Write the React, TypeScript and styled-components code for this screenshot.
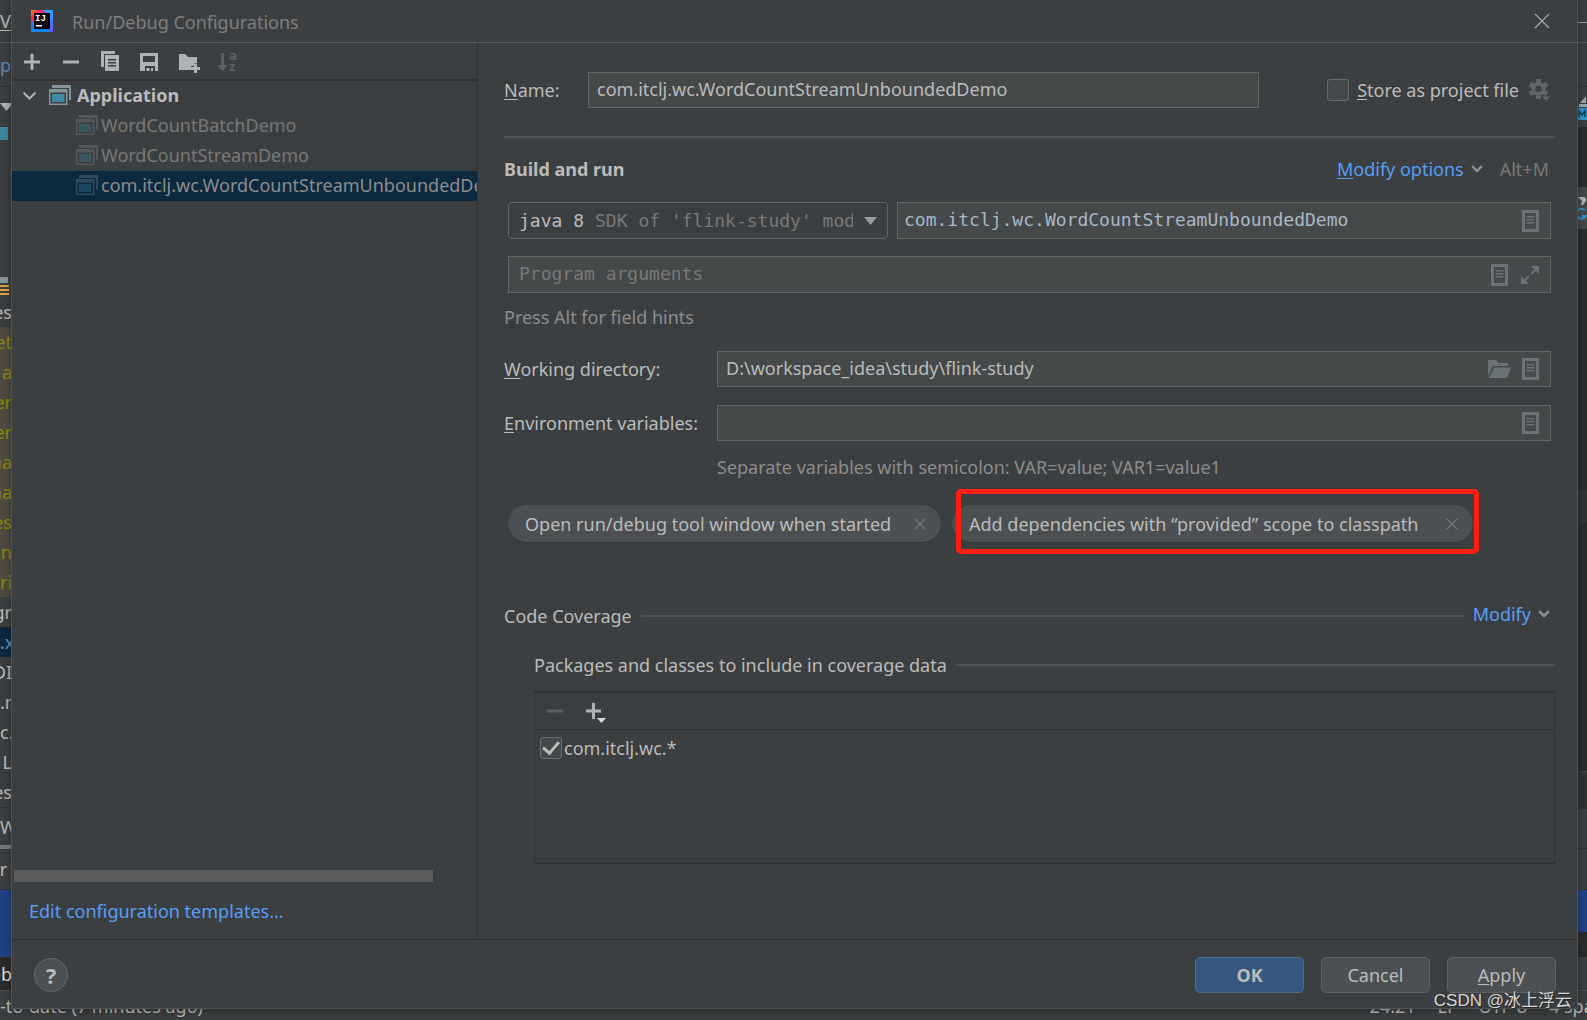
import React, { useState } from "react";
import styled, { createGlobalStyle, css } from "styled-components";

const sans = `"Noto Sans", "Open Sans", "Noto Sans CJK SC", sans-serif`;
const mono = `"DejaVu Sans Mono", "Liberation Mono", monospace`;

const c = {
  panel: "#3c3f41",
  editor: "#2b2b2b",
  field: "#45494a",
  fieldBorder: "#646464",
  text: "#bbbbbb",
  muted: "#8c8c8c",
  faint: "#787878",
  line: "#515151",
  dark: "#323232",
  link: "#589df6",
  select: "#0d293e",
  icon: "#afb1b3",
  fieldIcon: "#6b7275",
};

const GlobalStyle = createGlobalStyle`
  * { box-sizing: border-box; }
  body {
    margin: 0;
    background: ${c.panel};
    color: ${c.text};
    font-family: ${sans};
    font-size: 18px;
    line-height: 24px;
    overflow: hidden;
  }
  button, input, select { font: inherit; color: inherit; margin: 0; }
  button { cursor: pointer; }
  svg { display: block; flex: none; }
  u { text-decoration-thickness: 1px; text-underline-offset: 2px; }
`;

/* ---------- IDE window behind the dialog ---------- */

const Ide = styled.div`
  position: relative;
  display: flex;
  flex-direction: column;
  height: 100vh;
  overflow: hidden;
`;

const IdeBody = styled.div`
  display: flex;
  justify-content: space-between;
  flex: 1;
  min-height: 0;
`;

const Strip = styled.div`
  width: 12px;
  overflow: hidden;
`;

const Band = styled.div<{ h: number; bg?: string; fg?: string; top?: string; $end?: boolean }>`
  display: flex;
  align-items: center;
  justify-content: ${(p) => (p.$end ? "flex-end" : "flex-start")};
  height: ${(p) => p.h}px;
  background: ${(p) => p.bg ?? c.panel};
  color: ${(p) => p.fg ?? c.text};
  border-top: ${(p) => (p.top ? `1px solid ${p.top}` : "none")};
  white-space: pre;
  overflow: hidden;
`;

const Ignored = styled.span`
  color: #b07a35;
`;

const TabMark = styled.div`
  height: 4px;
  background: #747a80;
`;

const StatusBar = styled.footer`
  display: flex;
  align-items: center;
  gap: 22px;
  height: 30px;
  border-top: 1px solid #4b4d4e;
  white-space: nowrap;
`;

const StatusText = styled.span`
  flex: 1;
`;

const StatusClip = styled.span`
  width: 38px;
  overflow: hidden;
`;

/* ---------- Dialog frame ---------- */

const Dialog = styled.section`
  position: absolute;
  inset: 0 9px 11px 11px;
  display: flex;
  flex-direction: column;
  background: ${c.panel};
  border: 1px solid #505354;
  border-top: 0;
  box-shadow: 0 2px 8px rgba(0, 0, 0, 0.35);
`;

const TitleBar = styled.header`
  display: flex;
  align-items: center;
  height: 43px;
  padding: 0 27px 0 19px;
  border-bottom: 1px solid #555859;
  color: #7c7e7f;
`;

const Title = styled.h1`
  flex: 1;
  margin: 0 0 0 19px;
  padding-top: 2px;
  font-size: 18px;
  font-weight: 400;
`;

const IconButton = styled.button`
  display: flex;
  align-items: center;
  justify-content: center;
  padding: 0;
  border: 0;
  background: none;
`;

const Body = styled.div`
  display: flex;
  flex: 1;
  min-height: 0;
`;

const Sidebar = styled.aside`
  display: flex;
  flex-direction: column;
  width: 466px;
  border-right: 1px solid #2f3133;
`;

const Toolbar = styled.div`
  display: flex;
  align-items: center;
  gap: 15px;
  height: 38px;
  padding: 2px 8px 0;
  border-bottom: 2px solid ${c.dark};
`;

const Tree = styled.ul`
  flex: 1;
  margin: 0;
  padding: 0;
  list-style: none;
  overflow: hidden;
`;

const TreeRow = styled.li<{ $child?: boolean; $selected?: boolean }>`
  display: flex;
  align-items: center;
  gap: ${(p) => (p.$child ? 3 : 6)}px;
  height: 30px;
  padding: 0 0 2px ${(p) => (p.$child ? 64 : 10)}px;
  white-space: nowrap;
  overflow: hidden;
  background: ${(p) => (p.$selected ? c.select : "transparent")};
  color: ${(p) => (p.$selected ? c.muted : p.$child ? c.faint : c.text)};
  font-weight: ${(p) => (p.$child ? 400 : 700)};
`;

const Chevron = styled.span`
  width: 21px;
`;

const ScrollThumb = styled.div`
  width: 90%;
  height: 12px;
  margin-left: 2px;
  background: #595b5d;
`;

const TemplatesLink = styled.a`
  margin: 17px 0 16px 17px;
  color: ${c.link};
  text-decoration: none;
`;

const Footer = styled.footer`
  display: flex;
  align-items: center;
  gap: 17px;
  height: 69px;
  padding: 2px 21px 0 22px;
  border-top: 1px solid #2f3133;
`;

const HelpButton = styled.button`
  width: 34px;
  height: 34px;
  margin-right: auto;
  padding: 0;
  border: 1px solid #64686a;
  border-radius: 50%;
  background: #4c5052;
  font-size: 22px;
  font-weight: 700;
  line-height: 30px;
`;

const DialogButton = styled.button<{ $primary?: boolean }>`
  width: 109px;
  height: 36px;
  padding: 0;
  border: 1px solid #5e6060;
  border-radius: 5px;
  background: #4c5052;
  ${(p) =>
    p.$primary &&
    css`
      border-color: #4c708c;
      background: #365880;
      font-weight: 700;
    `}
`;

/* ---------- Form ---------- */

const Form = styled.main`
  flex: 1;
  min-width: 0;
  padding: 29px 22px 0 26px;
`;

const Row = styled.div<{ $top?: number; $inset?: boolean }>`
  display: flex;
  align-items: center;
  gap: 9px;
  margin-top: ${(p) => p.$top ?? 0}px;
  padding: 0 4px 0 ${(p) => (p.$inset ? 4 : 0)}px;
`;

const Label = styled.label<{ $w: number }>`
  width: ${(p) => p.$w}px;
  margin-right: -9px;
`;

const Field = styled.div<{ $mono?: boolean; $pad?: number }>`
  display: flex;
  align-items: center;
  gap: ${(p) => (p.$mono ? 13 : 11)}px;
  flex: 1;
  min-width: 0;
  height: ${(p) => (p.$mono ? 37 : 36)}px;
  padding: 0 11px 0 ${(p) => p.$pad ?? 8}px;
  border: 1px solid ${c.fieldBorder};
  background: ${c.field};
  font-family: ${(p) => (p.$mono ? mono : sans)};
  color: ${(p) => (p.$mono ? "#a9b7c6" : c.text)};
`;

const TextInput = styled.input`
  flex: 1;
  min-width: 0;
  padding: 0 0 2px;
  border: 0;
  outline: 0;
  background: none;
  &::placeholder {
    color: ${c.faint};
    opacity: 1;
  }
`;

const CheckLabel = styled.label<{ $gap: number }>`
  display: flex;
  align-items: center;
  gap: ${(p) => p.$gap}px;
`;

const CheckBox = styled.input`
  appearance: none;
  display: grid;
  place-items: center;
  width: 22px;
  height: 22px;
  border: 1px solid #6b6b6b;
  border-radius: 3px;
  background: #43494a;
  &:checked::after {
    content: "";
    width: 7px;
    height: 13px;
    margin-bottom: 4px;
    border: solid ${c.text};
    border-width: 0 3px 3px 0;
    transform: rotate(40deg);
  }
`;

const StoreGroup = styled.div`
  display: flex;
  align-items: center;
  gap: 10px;
  margin-left: 59px;
`;

const Divider = styled.hr`
  height: 2px;
  margin: 28px 0 0;
  border: 0;
  background: ${c.line};
`;

const Heading = styled.h2`
  flex: 1;
  margin: 0;
  font-size: 18px;
  font-weight: 700;
  line-height: 30px;
`;

const LinkButton = styled.button`
  display: flex;
  align-items: center;
  gap: 7px;
  padding: 0;
  border: 0;
  background: none;
  color: ${c.link};
`;

const Shortcut = styled.kbd`
  margin: 0 2px 0 8px;
  font-family: ${sans};
  color: ${c.faint};
`;

const Combo = styled.div`
  display: flex;
  align-items: center;
  gap: 11px;
  width: 380px;
  height: 37px;
  padding: 0 10px;
  border: 1px solid ${c.fieldBorder};
  border-radius: 4px;
  font-family: ${mono};
`;

const Select = styled.select`
  appearance: none;
  flex: 1;
  min-width: 0;
  padding: 0;
  border: 0;
  outline: 0;
  background: none;
  color: ${c.faint};
`;

const Hint = styled.p<{ $top: number; $left?: number }>`
  margin: ${(p) => p.$top}px 0 0 ${(p) => p.$left ?? 0}px;
  color: ${c.muted};
`;

const Tags = styled.div`
  display: flex;
  gap: 11px;
  margin: 26px 0 0 4px;
`;

const Tag = styled.div<{ $w: number }>`
  position: relative;
  display: flex;
  align-items: center;
  justify-content: space-between;
  min-width: ${(p) => p.$w}px;
  height: 37px;
  padding: 0 15px 0 17px;
  border-radius: 19px;
  background: #4c5052;
  box-shadow: 0 1px 1px #35383a;
  white-space: nowrap;
`;

const Highlight = styled.span`
  position: absolute;
  inset: -16px -6px -12px 4px;
  border: 5px solid #ff1f10;
  border-radius: 5px;
  pointer-events: none;
`;

const GroupRow = styled.div<{ $top: number; $left?: number }>`
  display: flex;
  align-items: center;
  gap: 9px;
  height: 24px;
  margin: ${(p) => p.$top}px 0 0 ${(p) => p.$left ?? 0}px;
`;

const Rule = styled.span`
  flex: 1;
  height: 2px;
  background: ${c.line};
`;

const ModifyLink = styled(LinkButton)`
  margin-right: 5px;
  padding-bottom: 4px;
`;

const CoverageTable = styled.div`
  margin: 14px 0 0 30px;
  border: 1px solid ${c.dark};
  border-width: 2px 1px;
`;

const CoverageTools = styled.div`
  display: flex;
  align-items: center;
  gap: 15px;
  height: 37px;
  padding-left: 8px;
  border-bottom: 1px solid ${c.dark};
`;

const CoverageList = styled.div`
  min-height: 132px;
  padding: 6px 5px;
`;

const Watermark = styled.span`
  position: absolute;
  right: 15px;
  bottom: 7px;
  font-family: "Liberation Sans", "Noto Sans CJK SC", sans-serif;
  font-size: 17px;
  color: #d6d6d6;
  text-shadow: 1px 1px 1px #222;
`;

/* ---------- Icons ---------- */

const IntellijLogo = () => (
  <svg width="22" height="22" viewBox="0 0 22 22" aria-hidden="true">
    <defs>
      <linearGradient id="ij" x1="0" y1="0" x2="1" y2="1">
        <stop offset="0" stopColor="#fc801d" />
        <stop offset="0.22" stopColor="#fe2857" />
        <stop offset="0.42" stopColor="#7b5ad8" />
        <stop offset="0.6" stopColor="#087cfa" />
        <stop offset="1" stopColor="#3b7cf7" />
      </linearGradient>
      <linearGradient id="ijBlue" x1="0" y1="0" x2="0" y2="1">
        <stop offset="0" stopColor="#22a8ff" />
        <stop offset="1" stopColor="#6b57ff" />
      </linearGradient>
    </defs>
    <rect width="22" height="22" fill="url(#ij)" />
    <path d="M12 0h10v22h-4V4z" fill="url(#ijBlue)" />
    <path d="M0 11l4 3v4h14v4H0z" fill="#1684fb" />
    <rect x="3" y="3" width="16" height="16" fill="#0b0208" />
    <text x="4" y="11" fontFamily="Liberation Mono" fontSize="9" fontWeight="700" fill="#fff">IJ</text>
    <rect x="5" y="15" width="6" height="1.5" fill="#fff" />
  </svg>
);

const Close = ({ size, color, w = 1.2 }: { size: number; color: string; w?: number }) => (
  <svg width={size} height={size} viewBox="0 0 16 16" aria-hidden="true">
    <path d="M1 1l14 14M15 1L1 15" stroke={color} strokeWidth={w} fill="none" />
  </svg>
);

const ToolSvg = ({ children, color = c.icon }: { children: React.ReactNode; color?: string }) => (
  <svg width="24" height="24" viewBox="0 0 24 24" fill={color} aria-hidden="true">
    {children}
  </svg>
);

const Plus = () => (
  <ToolSvg>
    <path d="M10.5 4h3v6.500h6.500v3h-6.500V20h-3v-6.500H4v-3h6.500z" />
  </ToolSvg>
);

const Minus = ({ color }: { color?: string }) => (
  <ToolSvg color={color}>
    <rect x="4" y="10.500" width="16" height="3" />
  </ToolSvg>
);

const Copy = () => (
  <ToolSvg>
    <path d="M3 1h14v3H6v13H3z" />
    <path fillRule="evenodd" d="M7 5h14v16H7zM10 9v1.500h8V9zM10 12v1.500h8V12zM10 15v1.500h8V15z" />
  </ToolSvg>
);

const Save = () => (
  <ToolSvg>
    <path fillRule="evenodd" d="M3 3h18v18h-3v-5H8v5H3zM6 6v6h12V6z" />
    <path d="M9.500 18h3v3h-3zM14 18h2v3h-2z" />
  </ToolSvg>
);

const FolderPlus = () => (
  <ToolSvg>
    <path d="M3 4h6l3 3h9v6h-3v3h-3v4H3z" />
    <path d="M18 13.500h3V17h3v3h-3v3h-3v-3h-3.500v-3H18z" />
  </ToolSvg>
);

const SortAz = () => (
  <ToolSvg color="#5d6062">
    <path d="M6 3h3v12h4l-5.500 6L2 15h4z" />
    <text x="14" y="10" fontFamily="Noto Sans" fontSize="13" fontWeight="700">a</text>
    <text x="14" y="21" fontFamily="Noto Sans" fontSize="13" fontWeight="700">z</text>
  </ToolSvg>
);

const ArrowDown = ({ color = c.icon }: { color?: string }) => (
  <svg width="13" height="8" viewBox="0 0 13 8" aria-hidden="true">
    <path d="M0 0h13L6.500 8z" fill={color} />
  </svg>
);

const ChevronDown = ({ w, color, stroke }: { w: number; color: string; stroke: number }) => (
  <svg width={w} height={w * 0.6} viewBox="0 0 15 9" aria-hidden="true">
    <path d="M1.500 1.500l6 6 6-6" fill="none" stroke={color} strokeWidth={stroke} />
  </svg>
);

const AppIcon = ({ dim }: { dim?: boolean }) => (
  <svg width="22" height="20" viewBox="0 0 22 20" opacity={dim ? 0.3 : 1} aria-hidden="true">
    <path d="M3 0h19v15h-2V3H3z" fill="#87939a" />
    <path fillRule="evenodd" d="M0 4h18.500v16H0zM1.500 7.500v11H17v-11z" fill="#87939a" />
    <rect x="3" y="9" width="12.500" height="8" fill="#3e8ba8" />
  </svg>
);

const DocIcon = () => (
  <svg width="17" height="22" viewBox="0 0 17 22" fill={c.fieldIcon} aria-hidden="true">
    <path fillRule="evenodd" d="M0 0h17v22H0zM3 3v16h11V3z" />
    <path d="M4.500 6h8v1.500h-8zM4.500 9h8v1.500h-8zM4.500 12h8v1.500h-8z" />
  </svg>
);

const ExpandIcon = () => (
  <svg width="18" height="20" viewBox="0 0 18 20" aria-hidden="true">
    <path d="M10 1h8v8zM0 11v8h8z" fill={c.fieldIcon} />
    <path d="M3 16l5-5M10.500 9L15 4" stroke={c.fieldIcon} strokeWidth="2" />
  </svg>
);

const FolderIcon = () => (
  <svg width="23" height="18" viewBox="0 0 23 18" fill={c.fieldIcon} aria-hidden="true">
    <path d="M0 0h8l3 3h9v3H5L0 16z" />
    <path d="M6 7.500h17L19 18H1z" />
  </svg>
);

const GearIcon = () => (
  <svg width="22" height="24" viewBox="0 0 22 24" aria-hidden="true">
    <g fill="#616466">
      {[0, 60, 120].map((a) => (
        <rect key={a} x="7" y="1" width="5" height="20" rx="1" transform={`rotate(${a} 9.500 11)`} />
      ))}
      <path fillRule="evenodd" d="M9.500 4a7 7 0 1 0 0 14 7 7 0 0 0 0-14z" />
    </g>
    <circle cx="9.500" cy="11" r="3.200" fill={c.panel} />
    <path d="M12 18h10l-5 5.500z" fill="#616466" stroke={c.panel} />
  </svg>
);

const AddMenu = () => (
  <svg width="24" height="24" viewBox="0 0 24 24" aria-hidden="true">
    <path d="M10 4h3v6.500h6v3h-6V20h-3v-6.500H4v-3h6z" fill={c.icon} />
    <path d="M15 19h9l-4.500 5z" fill="#dcdcdc" />
  </svg>
);

/* ---------- Data ---------- */

const configs = [
  { name: "WordCountBatchDemo" },
  { name: "WordCountStreamDemo" },
  { name: "com.itclj.wc.WordCountStreamUnboundedDemo", selected: true },
];

const projectRows = ["et", "a", "er", "er", "na", "na", "es", "in", "ri"];

const LeftStrip = () => (
  <Strip aria-hidden="true">
    <Band h={42}>
      {" "}
      <u>V</u>
    </Band>
    <Band h={44} top="#555859" fg="#5d87b5">p</Band>
    <Band h={40} top={c.dark}>
      <ArrowDown />
    </Band>
    <Band h={14}>
      <svg width="8" height="13"><rect width="8" height="13" fill="#3e86a0" /></svg>
    </Band>
    <Band h={136} />
    <Band h={20}>
      <svg width="9" height="19">
        <rect width="8" height="6" fill="#87939a" />
        <path d="M0 9h9M0 13h9M0 17h9" stroke="#d9a343" strokeWidth="2" />
      </svg>
    </Band>
    <Band h={31} $end>es</Band>
    {projectRows.map((t, i) => (
      <Band key={i} h={30} bg="#4f4b41" fg="#8a8a08" $end>{t}</Band>
    ))}
    <Band h={30} $end>gr</Band>
    <Band h={30} bg={c.select} fg="#6897bb">.x</Band>
    <Band h={30} $end>DI</Band>
    <Band h={30}>.m</Band>
    <Band h={30}>c.</Band>
    <Band h={30} $end><Ignored>l</Ignored> L</Band>
    <Band h={30} $end>es</Band>
    <Band h={38} top={c.dark}>W</Band>
    <TabMark />
    <Band h={40} $end>er </Band>
    <Band h={68} top={c.dark} bg="#214283" />
    <Band h={33} top={c.dark} bg={c.editor} fg="#dddddd" $end>eb</Band>
  </Strip>
);

const RightStrip = () => (
  <Strip aria-hidden="true">
    <Band h={22} />
    <Band h={20} top="#9a9c9d" />
    <Band h={44} top="#555859" />
    <Band h={41} top={c.dark}>
      <svg width="12" height="26">
        <path d="M11 2v7H5z" fill="#9aa7b0" />
        <path d="M4 10h8v3H4z" fill="#9aa7b0" />
        <rect y="14" width="12" height="12" fill="#3592c4" />
        <path d="M4 23v-6l3 4 3-4v6" stroke="#1f3f4d" strokeWidth="1.500" fill="none" />
      </svg>
    </Band>
    <Band h={60} bg={c.editor} />
    <Band h={42} bg="#45494a">
      <svg width="12" height="26">
        <path d="M3 2h5a3 3 0 0 1 3 4l-3 4H6l1-4z" fill="#afb1b3" />
        <path d="M10 15a5 5 0 1 0 1 6h-4" stroke="#3592c4" strokeWidth="2" fill="none" />
      </svg>
    </Band>
    <Band h={261} bg={c.editor} />
    <Band h={33} bg="#323232" />
    <Band h={248} bg={c.editor} />
    <Band h={38} bg="#313335" top="#3c3f41" />
    <Band h={39} />
    <Band h={41} top={c.dark} />
    <Band h={43} top={c.dark} bg="#214283" />
    <Band h={25} bg={c.editor} />
    <Band h={33} />
  </Strip>
);

export default function App() {
  const [name, setName] = useState("com.itclj.wc.WordCountStreamUnboundedDemo");
  const [mainClass, setMainClass] = useState("com.itclj.wc.WordCountStreamUnboundedDemo");
  const [dir, setDir] = useState("D:\\workspace_idea\\study\\flink-study");

  return (
    <>
      <GlobalStyle />
      <Ide>
        <IdeBody>
          <LeftStrip />
          <RightStrip />
        </IdeBody>
        <StatusBar>
          <StatusText>-to-date (7 minutes ago)</StatusText>
          <span>24:21</span>
          <span>LF</span>
          <span>UTF-8</span>
          <StatusClip>4 spaces</StatusClip>
        </StatusBar>

        <Dialog role="dialog" aria-labelledby="dialog-title">
          <TitleBar>
            <IntellijLogo />
            <Title id="dialog-title">Run/Debug Configurations</Title>
            <IconButton aria-label="Close">
              <Close size={16} color="#a4a6a7" />
            </IconButton>
          </TitleBar>

          <Body>
            <Sidebar>
              <Toolbar>
                <IconButton aria-label="Add"><Plus /></IconButton>
                <IconButton aria-label="Remove"><Minus /></IconButton>
                <IconButton aria-label="Copy"><Copy /></IconButton>
                <IconButton aria-label="Save"><Save /></IconButton>
                <IconButton aria-label="New folder"><FolderPlus /></IconButton>
                <IconButton aria-label="Sort" disabled><SortAz /></IconButton>
              </Toolbar>
              <Tree>
                <TreeRow>
                  <Chevron>
                    <ChevronDown w={15} color={c.icon} stroke={2} />
                  </Chevron>
                  <AppIcon />
                  Application
                </TreeRow>
                {configs.map((cfg) => (
                  <TreeRow key={cfg.name} $child $selected={cfg.selected}>
                    <AppIcon dim />
                    {cfg.name}
                  </TreeRow>
                ))}
              </Tree>
              <ScrollThumb />
              <TemplatesLink href="#templates">Edit configuration templates...</TemplatesLink>
            </Sidebar>

            <Form>
              <Row>
                <Label $w={84} htmlFor="name"><u>N</u>ame:</Label>
                <Field>
                  <TextInput id="name" value={name} onChange={(e) => setName(e.target.value)} />
                </Field>
                <StoreGroup>
                  <CheckLabel $gap={8}>
                    <CheckBox type="checkbox" />
                    <span><u>S</u>tore as project file</span>
                  </CheckLabel>
                  <IconButton aria-label="Storage settings"><GearIcon /></IconButton>
                </StoreGroup>
              </Row>

              <Divider />

              <Row $top={16}>
                <Heading>Build and run</Heading>
                <LinkButton>
                  <span><u>M</u>odify options</span>
                  <ChevronDown w={12} color="#8a9199" stroke={3} />
                </LinkButton>
                <Shortcut>Alt+M</Shortcut>
              </Row>

              <Row $top={18} $inset>
                <Combo>
                  <label htmlFor="jre">java 8</label>
                  <Select id="jre">
                    <option>SDK of 'flink-study' module</option>
                  </Select>
                  <ArrowDown color="#9a9da0" />
                </Combo>
                <Field $mono $pad={6}>
                  <TextInput aria-label="Main class" value={mainClass} onChange={(e) => setMainClass(e.target.value)} />
                  <IconButton aria-label="Browse classes"><DocIcon /></IconButton>
                </Field>
              </Row>

              <Row $top={17} $inset>
                <Field $mono $pad={10}>
                  <TextInput aria-label="Program arguments" placeholder="Program arguments" />
                  <IconButton aria-label="Insert macros"><DocIcon /></IconButton>
                  <IconButton aria-label="Expand"><ExpandIcon /></IconButton>
                </Field>
              </Row>
              <Hint $top={12}>Press Alt for field hints</Hint>

              <Row $top={22}>
                <Label $w={213} htmlFor="dir"><u>W</u>orking directory:</Label>
                <Field>
                  <TextInput id="dir" value={dir} onChange={(e) => setDir(e.target.value)} />
                  <IconButton aria-label="Browse folders"><FolderIcon /></IconButton>
                  <IconButton aria-label="Insert directory macro"><DocIcon /></IconButton>
                </Field>
              </Row>

              <Row $top={18}>
                <Label $w={213} htmlFor="env"><u>E</u>nvironment variables:</Label>
                <Field>
                  <TextInput id="env" />
                  <IconButton aria-label="Edit variables"><DocIcon /></IconButton>
                </Field>
              </Row>
              <Hint $top={14} $left={213}>Separate variables with semicolon: VAR=value; VAR1=value1</Hint>

              <Tags>
                <Tag $w={433}>
                  Open run/debug tool window when started
                  <IconButton aria-label="Remove option"><Close size={12} color="#74787a" w={1.6} /></IconButton>
                </Tag>
                <Tag $w={521}>
                  Add dependencies with “provided” scope to classpath
                  <IconButton aria-label="Remove option"><Close size={12} color="#74787a" w={1.6} /></IconButton>
                  <Highlight />
                </Tag>
              </Tags>

              <GroupRow $top={62}>
                Code Coverage
                <Rule />
                <ModifyLink>
                  Modify
                  <ChevronDown w={12} color="#8a9199" stroke={3} />
                </ModifyLink>
              </GroupRow>
              <GroupRow $top={25} $left={30}>
                Packages and classes to include in coverage data
                <Rule />
              </GroupRow>

              <CoverageTable>
                <CoverageTools>
                  <IconButton aria-label="Remove pattern" disabled><Minus color="#5d6062" /></IconButton>
                  <IconButton aria-label="Add pattern"><AddMenu /></IconButton>
                </CoverageTools>
                <CoverageList>
                  <CheckLabel $gap={2}>
                    <CheckBox type="checkbox" defaultChecked />
                    com.itclj.wc.*
                  </CheckLabel>
                </CoverageList>
              </CoverageTable>
            </Form>
          </Body>

          <Footer>
            <HelpButton aria-label="Help">?</HelpButton>
            <DialogButton $primary>OK</DialogButton>
            <DialogButton>Cancel</DialogButton>
            <DialogButton><u>A</u>pply</DialogButton>
          </Footer>
        </Dialog>
        <Watermark>CSDN @冰上浮云</Watermark>
      </Ide>
    </>
  );
}
